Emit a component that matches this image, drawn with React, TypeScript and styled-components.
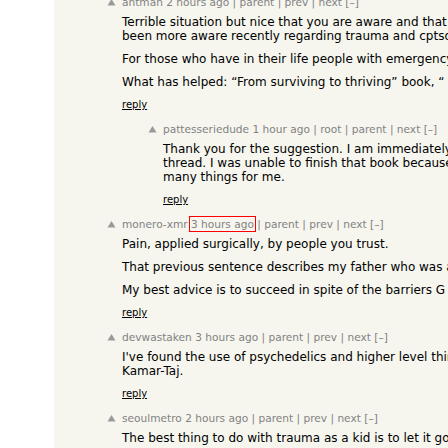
import React from "react";
import styled, { createGlobalStyle } from "styled-components";

const GlobalStyle = createGlobalStyle`
  html, body {
    margin: 0;
    padding: 0;
    height: 100%;
    background: #ffffff;
    overflow: hidden;
  }
`;

const Page = styled.div`
  margin-left: 54px;
  min-height: 100vh;
  background: #f6f6ef;
  overflow: hidden;
  font-family: "DejaVu Sans", Verdana, sans-serif;
`;

const Thread = styled.div`
  display: flex;
  flex-direction: column;
  margin-top: -5px;
`;

const Row = styled.div<{ $level: number }>`
  display: flex;
  padding-left: ${(p) => 53 + p.$level * 41}px;
  margin-bottom: 11px;
`;

const Vote = styled.div`
  flex: none;
  width: 15px;
  padding-top: 3px;
  line-height: 0;
`;

const Content = styled.div`
  display: flex;
  flex-direction: column;
  white-space: nowrap;
`;

const Meta = styled.div`
  font-size: 10.6px;
  line-height: 14px;
  color: #828282;
`;

const Stamp = styled.span<{ $marked?: boolean }>`
  outline: ${(p) => (p.$marked ? "1px solid #ff0000" : "none")};
  outline-offset: 1px;
`;

const Body = styled.div`
  margin-top: 6px;
  font-size: 12px;
  line-height: 14px;
  color: #000000;
`;

const Para = styled.div`
  & + & {
    margin-top: 9px;
  }
`;

const Reply = styled.div`
  margin-top: 10px;
  font-size: 10px;
  line-height: 12px;
  color: #000000;
  text-decoration: underline;
`;

type Comment = {
  user: string;
  age: string;
  links: string[];
  level: number;
  marked?: boolean;
  paras: string[][];
};

const comments: Comment[] = [
  {
    user: "antman",
    age: "2 hours ago",
    links: ["parent", "prev", "next"],
    level: 0,
    paras: [
      [
        "Terrible situation but nice that you are aware and that you",
        "been more aware recently regarding trauma and cptsd.",
      ],
      ["For those who have in their life people with emergency"],
      ["What has helped: \u201CFrom surviving to thriving\u201D book, \u201C"],
    ],
  },
  {
    user: "pattesseriedude",
    age: "1 hour ago",
    links: ["root", "parent", "next"],
    level: 1,
    paras: [
      [
        "Thank you for the suggestion. I am immediately",
        "thread. I was unable to finish that book because",
        "many things for me.",
      ],
    ],
  },
  {
    user: "monero-xmr",
    age: "3 hours ago",
    links: ["parent", "prev", "next"],
    level: 0,
    marked: true,
    paras: [
      ["Pain, applied surgically, by people you trust."],
      ["That previous sentence describes my father who was a"],
      ["My best advice is to succeed in spite of the barriers G"],
    ],
  },
  {
    user: "devwastaken",
    age: "3 hours ago",
    links: ["parent", "prev", "next"],
    level: 0,
    paras: [
      [
        "I've found the use of psychedelics and higher level thinking",
        "Kamar-Taj.",
      ],
    ],
  },
  {
    user: "seoulmetro",
    age: "2 hours ago",
    links: ["parent", "prev", "next"],
    level: 0,
    paras: [["The best thing to do with trauma as a kid is to let it go"]],
  },
];

function VoteArrow() {
  return (
    <svg width="9" height="8" viewBox="0 0 9 8">
      <polygon points="4.5,1 8.5,7.5 0.5,7.5" fill="#9a9a9a" />
    </svg>
  );
}

export default function App() {
  return (
    <>
      <GlobalStyle />
      <Page>
        <Thread>
          {comments.map((c, i) => (
            <Row key={i} $level={c.level}>
              <Vote>
                <VoteArrow />
              </Vote>
              <Content>
                <Meta>
                  {c.user} <Stamp $marked={c.marked}>{c.age}</Stamp>
                  {c.links.map((l) => ` | ${l}`).join("")}
                  {" [\u2013]"}
                </Meta>
                <Body>
                  {c.paras.map((p, j) => (
                    <Para key={j}>
                      {p.map((line, k) => (
                        <div key={k}>{line}</div>
                      ))}
                    </Para>
                  ))}
                </Body>
                {i < comments.length - 1 && <Reply>reply</Reply>}
              </Content>
            </Row>
          ))}
        </Thread>
      </Page>
    </>
  );
}
